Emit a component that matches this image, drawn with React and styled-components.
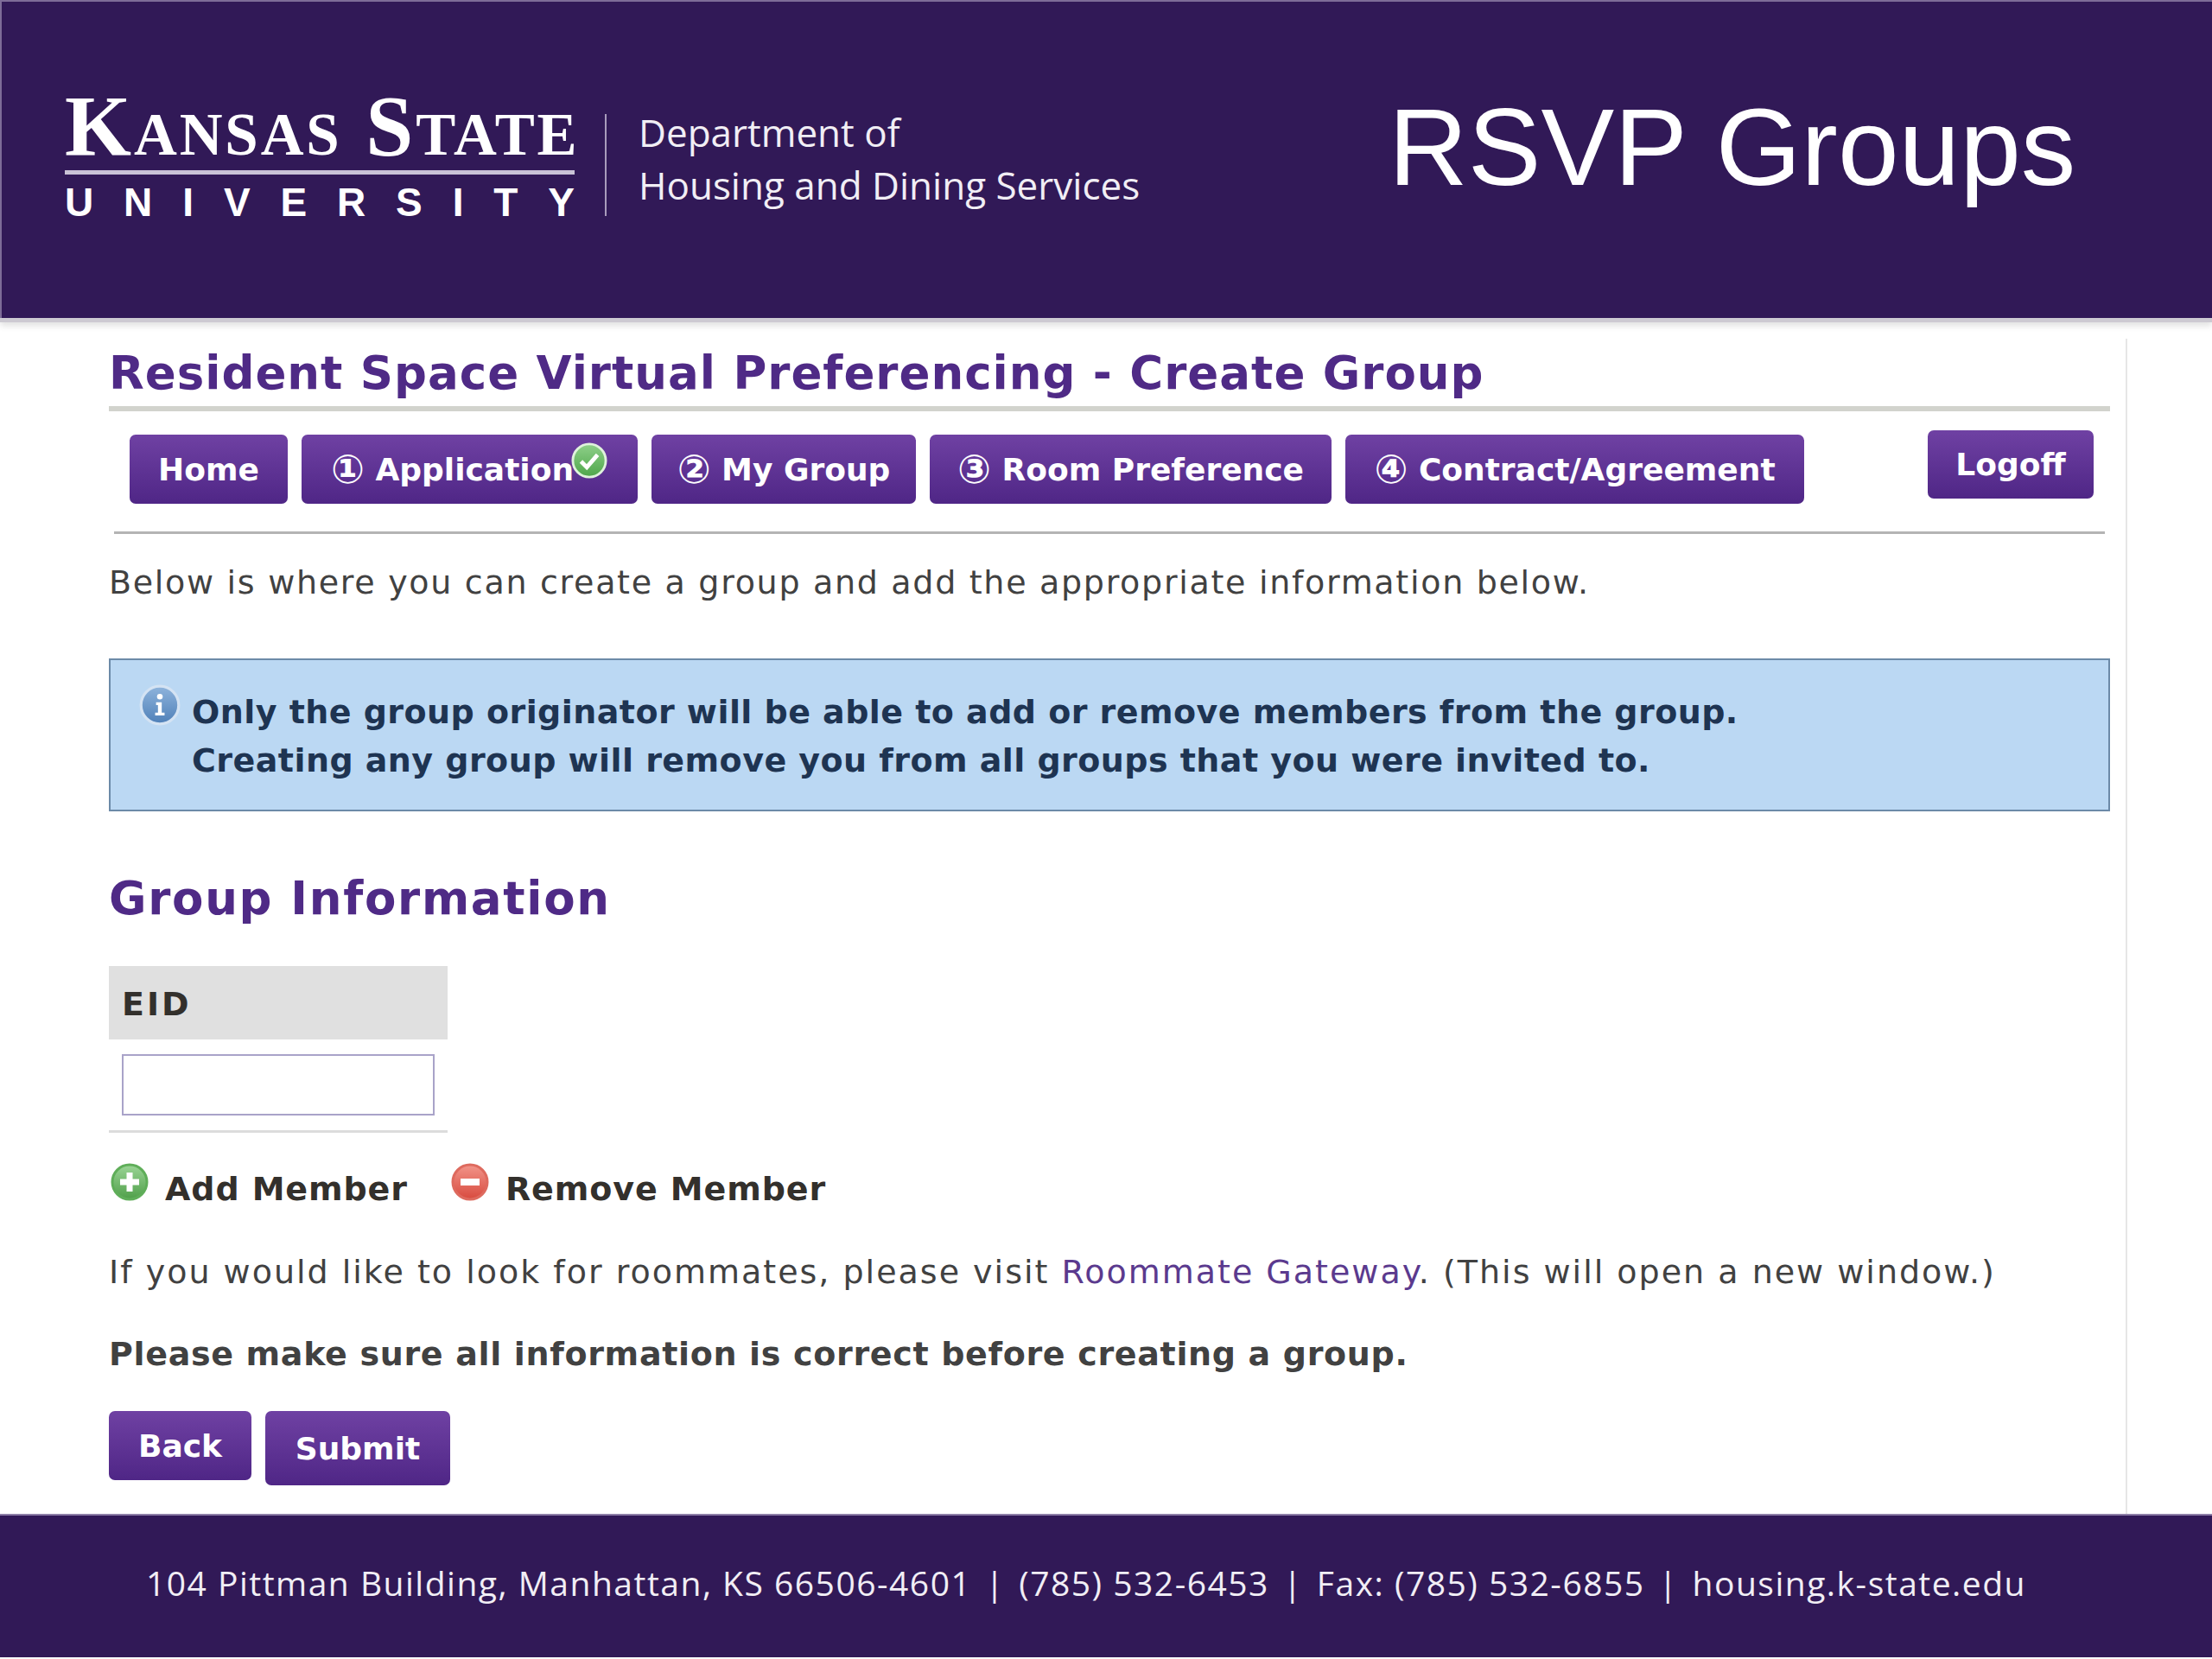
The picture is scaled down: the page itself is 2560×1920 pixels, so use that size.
import styled, { createGlobalStyle } from "styled-components";

const GlobalStyle = createGlobalStyle`
  html, body {
    margin: 0;
    padding: 0;
    background: #fff;
  }
  body {
    font-family: "DejaVu Sans", Verdana, sans-serif;
    color: #414141;
  }
`;

const Page = styled.div`
  width: 2560px;
  min-height: 1920px;
  display: flex;
  flex-direction: column;
`;

const Header = styled.header`
  flex: none;
  height: 368px;
  box-sizing: border-box;
  background: #311957;
  border-top: 2px solid #7d6c98;
  border-left: 2px solid #7d6c98;
  box-shadow: 0 5px 0 #cdcad2, 0 9px 7px rgba(70, 70, 70, 0.16);
  display: flex;
  align-items: flex-start;
  padding: 106px 0 0 73px;
`;

const Logo = styled.div`
  flex: none;
  width: 590px;
  color: #fff;
`;

const LogoName = styled.div`
  font-family: "Liberation Serif", serif;
  font-weight: 700;
  font-size: 99px;
  font-variant: small-caps;
  letter-spacing: 2.9px;
  line-height: 76px;
  height: 76px;
  white-space: nowrap;
`;

const LogoRule = styled.div`
  height: 5px;
  margin-top: 13px;
  background: #c9c2d6;
`;

const LogoSub = styled.div`
  display: flex;
  justify-content: space-between;
  margin-top: 12px;
  font-family: "Liberation Sans", sans-serif;
  font-weight: 700;
  font-size: 46px;
  line-height: 40px;
`;

const LogoDivider = styled.div`
  flex: none;
  width: 2px;
  height: 118px;
  margin: 24px 37px 0 35px;
  background: #a99cbc;
`;

const Department = styled.div`
  flex: none;
  width: 579px;
  font-family: "Open Sans", sans-serif;
  font-size: 44px;
  line-height: 61px;
  color: #f1eef5;
  margin-top: 15px;
  white-space: nowrap;
`;

const SiteTitle = styled.div`
  font-family: "Liberation Sans", sans-serif;
  font-size: 127px;
  line-height: 130px;
  color: #fff;
  margin-left: 289px;
  margin-top: -3px;
  white-space: nowrap;
`;

const Main = styled.main`
  flex: 1;
  box-sizing: border-box;
  width: 2336px;
  margin: 24px 0 0 126px;
  padding-right: 18px;
  border-right: 2px solid #e6e6e6;
`;

const PageTitle = styled.h1`
  margin: 0;
  height: 84px;
  box-sizing: border-box;
  line-height: 79px;
  font-size: 53px;
  font-weight: 700;
  letter-spacing: 1px;
  color: #4f2a86;
  border-bottom: 6px solid #d2d3cd;
  white-space: nowrap;
`;

const Nav = styled.nav`
  display: flex;
  justify-content: space-between;
  align-items: flex-start;
  margin-top: 22px;
  padding: 0 19px 0 24px;
`;

const Tabs = styled.div`
  display: flex;
  gap: 16px;
  padding-top: 5px;
`;

const PurpleButton = styled.a`
  position: relative;
  display: flex;
  align-items: center;
  justify-content: center;
  box-sizing: border-box;
  width: ${(p) => p.$width}px;
  height: ${(p) => p.$height || 80}px;
  border-radius: 7px;
  background: linear-gradient(#6f41a3, #4f2686);
  color: #fff;
  font-size: 36px;
  font-weight: 700;
  white-space: pre;
`;

const StepNumber = styled.span`
  font-size: 46px;
  line-height: 0;
`;

const BadgeGap = styled.span`
  width: 40px;
`;

const CheckBadge = styled.svg`
  position: absolute;
  right: 35px;
  top: 9px;
  width: 42px;
  height: 42px;
`;

const NavRule = styled.hr`
  border: 0;
  height: 3px;
  margin: 32px 6px 0;
  background: #b4b4b4;
`;

const BodyText = styled.p`
  margin: ${(p) => p.$top}px 0 0;
  font-size: 38px;
  line-height: 50px;
  letter-spacing: ${(p) => p.$spacing}px;
  font-weight: ${(p) => (p.$bold ? 700 : 400)};
  white-space: nowrap;
`;

const TextLink = styled.a`
  color: #5b3a8e;
`;

const InfoBox = styled.div`
  display: flex;
  box-sizing: border-box;
  height: 177px;
  margin-top: 63px;
  padding: 32px 0 0 33px;
  border: 2px solid #6c8aa8;
  background: #bbd8f3;
  color: #1e3452;
  font-size: 38px;
  font-weight: 700;
  line-height: 56px;
  letter-spacing: 0.45px;
`;

const InfoIcon = styled.svg`
  flex: none;
  width: 48px;
  height: 48px;
  margin: -4px 13px 0 0;
`;

const SectionTitle = styled.h2`
  margin: 66px 0 0;
  font-size: 53px;
  line-height: 70px;
  letter-spacing: 1.7px;
  font-weight: 700;
  color: #4f2a86;
`;

const MemberTable = styled.div`
  width: 392px;
  margin-top: 43px;
  border-bottom: 3px solid #dcdcdc;
`;

const MemberHead = styled.div`
  height: 85px;
  box-sizing: border-box;
  padding-left: 15px;
  background: #e0e0e0;
  color: #33302c;
  font-size: 38px;
  font-weight: 700;
  letter-spacing: 3px;
  line-height: 89px;
`;

const MemberCell = styled.div`
  padding: 17px 15px;
`;

const MemberInput = styled.input`
  display: block;
  width: 100%;
  height: 71px;
  box-sizing: border-box;
  padding: 0 8px;
  border: 2px solid #a9a3c9;
  background: #fff;
`;

const MemberActions = styled.div`
  display: flex;
  margin-top: 40px;
  gap: 50px;
  padding-left: 2px;
`;

const MemberAction = styled.a`
  display: flex;
  align-items: flex-start;
  gap: 19px;
  color: #33302c;
  font-size: 38px;
  font-weight: 700;
  line-height: 50px;
  letter-spacing: 0.9px;
`;

const ActionIcon = styled.svg`
  width: 44px;
  height: 44px;
  margin-top: -5px;
`;

const FormButtons = styled.div`
  display: flex;
  align-items: flex-start;
  gap: 16px;
  margin-top: 41px;
`;

const Footer = styled.footer`
  flex: none;
  height: 166px;
  margin-bottom: 2px;
  padding: 0 46px 10px 0;
  background: #311957;
  border-top: 2px solid #8d7ea6;
  box-sizing: border-box;
  display: flex;
  align-items: center;
  justify-content: center;
  color: #f1eef5;
  font-family: "Open Sans", sans-serif;
  font-size: 39px;
  letter-spacing: 1.5px;
  white-space: nowrap;
`;

const FooterSep = styled.span`
  margin: 0 16px;
`;

const tabs = [
  { step: "", label: "Home", width: 183 },
  { step: "①", label: " Application", width: 389, done: true },
  { step: "②", label: " My Group", width: 306 },
  { step: "③", label: " Room Preference", width: 465 },
  { step: "④", label: " Contract/Agreement", width: 531 },
];

const footerItems = [
  "104 Pittman Building, Manhattan, KS 66506-4601",
  "(785) 532-6453",
  "Fax: (785) 532-6855",
  "housing.k-state.edu",
];

const Circle = ({ id, top, bottom, ring, children }) => (
  <>
    <defs>
      <linearGradient id={id} x1="0" y1="0" x2="0" y2="1">
        <stop offset="0" stopColor={top} />
        <stop offset="1" stopColor={bottom} />
      </linearGradient>
    </defs>
    <circle cx="22" cy="22" r="20" fill={`url(#${id})`} stroke={ring} strokeWidth="3" />
    {children}
  </>
);

const App = () => {
  return (
    <Page>
      <GlobalStyle />
      <Header>
        <Logo>
          <LogoName>Kansas State</LogoName>
          <LogoRule />
          <LogoSub>
            {"UNIVERSITY".split("").map((letter, i) => (
              <span key={i}>{letter}</span>
            ))}
          </LogoSub>
        </Logo>
        <LogoDivider />
        <Department>
          Department of
          <br />
          Housing and Dining Services
        </Department>
        <SiteTitle>RSVP Groups</SiteTitle>
      </Header>
      <Main>
        <PageTitle>Resident Space Virtual Preferencing - Create Group</PageTitle>
        <Nav>
          <Tabs>
            {tabs.map((tab) => (
              <PurpleButton key={tab.label} $width={tab.width}>
                {tab.step && <StepNumber>{tab.step}</StepNumber>}
                {tab.label}
                {tab.done && <BadgeGap />}
                {tab.done && (
                  <CheckBadge viewBox="0 0 44 44">
                    <Circle id="check" top="#8fd08a" bottom="#4ea64a" ring="#dff2dc">
                      <path d="M12 23l7 7 13-15" fill="none" stroke="#fff" strokeWidth="5" />
                    </Circle>
                  </CheckBadge>
                )}
              </PurpleButton>
            ))}
          </Tabs>
          <PurpleButton $width={192} $height={79}>Logoff</PurpleButton>
        </Nav>
        <NavRule />
        <BodyText $top={31} $spacing={1.7}>
          Below is where you can create a group and add the appropriate information below.
        </BodyText>
        <InfoBox>
          <InfoIcon viewBox="0 0 44 44">
            <Circle id="info" top="#8fb4dc" bottom="#4f80b8" ring="#d4e3f3">
              <circle cx="22" cy="13" r="3" fill="#fff" />
              <path d="M18 19h6v11h3v3H17v-3h3v-8h-2z" fill="#fff" />
            </Circle>
          </InfoIcon>
          <div>
            Only the group originator will be able to add or remove members from the group.
            <br />
            Creating any group will remove you from all groups that you were invited to.
          </div>
        </InfoBox>
        <SectionTitle>Group Information</SectionTitle>
        <MemberTable>
          <MemberHead>EID</MemberHead>
          <MemberCell>
            <MemberInput type="text" />
          </MemberCell>
        </MemberTable>
        <MemberActions>
          <MemberAction>
            <ActionIcon viewBox="0 0 44 44">
              <Circle id="add" top="#9bd596" bottom="#4f9f49" ring="#5fae59">
                <path d="M18.500 11h7v7.500H33v7h-7.500V33h-7v-7.500H11v-7h7.500z" fill="#fff" />
              </Circle>
            </ActionIcon>
            Add Member
          </MemberAction>
          <MemberAction>
            <ActionIcon viewBox="0 0 44 44">
              <Circle id="remove" top="#f2958a" bottom="#d84a3e" ring="#de6a5e">
                <rect x="11" y="18" width="22" height="8" fill="#fff" />
              </Circle>
            </ActionIcon>
            Remove Member
          </MemberAction>
        </MemberActions>
        <BodyText $top={46} $spacing={2}>
          If you would like to look for roommates, please visit <TextLink>Roommate Gateway</TextLink>. (This will open a new window.)
        </BodyText>
        <BodyText $top={45} $bold $spacing={0.67}>
          Please make sure all information is correct before creating a group.
        </BodyText>
        <FormButtons>
          <PurpleButton $width={165}>Back</PurpleButton>
          <PurpleButton $width={214} $height={86}>Submit</PurpleButton>
        </FormButtons>
      </Main>
      <Footer>
        {footerItems.map((item, i) => (
          <span key={item}>
            {i > 0 && <FooterSep>|</FooterSep>}
            {item}
          </span>
        ))}
      </Footer>
    </Page>
  );
};

export default App;
